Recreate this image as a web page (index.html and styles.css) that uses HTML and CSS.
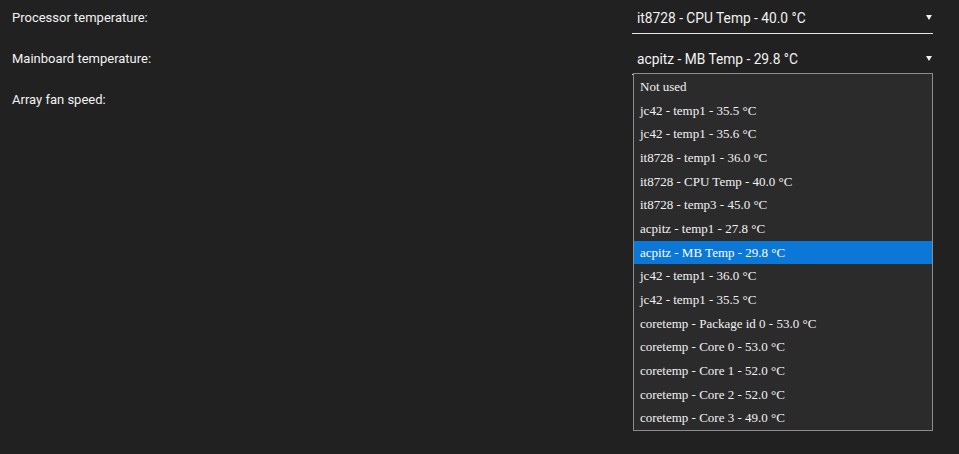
FILE: index.html
```html
<!DOCTYPE html>
<html lang="en">
<head>
    <meta charset="UTF-8">
    <meta name="viewport" content="width=device-width, initial-scale=1.0">
    <title>Temperature settings</title>
    <link rel="stylesheet" href="styles.css">
</head>
<body>
    <div class="settings">
        <div class="row">
            <div class="label">Processor temperature:</div>
            <div class="select">
                <span class="value">it8728 - CPU Temp - 40.0 °C</span>
                <span class="arrow"></span>
            </div>
        </div>

        <div class="row open">
            <div class="label">Mainboard temperature:</div>
            <div class="select">
                <span class="value">acpitz - MB Temp - 29.8 °C</span>
                <span class="arrow"></span>
            </div>
            <ul class="dropdown">
                <li>Not used</li>
                <li>jc42 - temp1 - 35.5 °C</li>
                <li>jc42 - temp1 - 35.6 °C</li>
                <li>it8728 - temp1 - 36.0 °C</li>
                <li>it8728 - CPU Temp - 40.0 °C</li>
                <li>it8728 - temp3 - 45.0 °C</li>
                <li>acpitz - temp1 - 27.8 °C</li>
                <li class="selected">acpitz - MB Temp - 29.8 °C</li>
                <li>jc42 - temp1 - 36.0 °C</li>
                <li>jc42 - temp1 - 35.5 °C</li>
                <li>coretemp - Package id 0 - 53.0 °C</li>
                <li>coretemp - Core 0 - 53.0 °C</li>
                <li>coretemp - Core 1 - 52.0 °C</li>
                <li>coretemp - Core 2 - 52.0 °C</li>
                <li>coretemp - Core 3 - 49.0 °C</li>
            </ul>
        </div>

        <div class="row">
            <div class="label">Array fan speed:</div>
        </div>
    </div>
</body>
</html>
```

FILE: styles.css
```css
html, body {
    height: 100%;
}
body {
    margin: 0;
    background: #212121;
    color: #f2f2f2;
    font-family: Roboto, "Open Sans", sans-serif;
    font-size: 13px;
}
.settings {
    padding: 0 26px 0 12px;
}
.row {
    position: relative;
    display: flex;
    justify-content: space-between;
    height: 41px;
}
.label {
    line-height: 36px;
}
.select {
    display: flex;
    justify-content: space-between;
    align-items: center;
    box-sizing: border-box;
    width: 301px;
    height: 34px;
    padding: 2px 1px 0 5px;
    border-bottom: 1px solid #e6e6e6;
}
.value {
    font-size: 13.75px;
}
.arrow {
    width: 0;
    height: 0;
    border-left: 3px solid transparent;
    border-right: 3px solid transparent;
    border-top: 5px solid #f2f2f2;
    margin-top: -1px;
}
.dropdown {
    position: absolute;
    top: 32px;
    right: 0;
    box-sizing: border-box;
    width: 300px;
    margin: 0;
    padding: 1px 0 0;
    list-style: none;
    background: #2b2b2b;
    border: 1px solid #8c8c8c;
    font-family: "Liberation Serif", serif;
    font-size: 13px;
    z-index: 2;
}
.dropdown li {
    height: 23.67px;
    line-height: 23.67px;
    padding-left: 6px;
    white-space: nowrap;
}
.dropdown li.selected {
    background: #0b78d7;
    color: #fff;
}
```
